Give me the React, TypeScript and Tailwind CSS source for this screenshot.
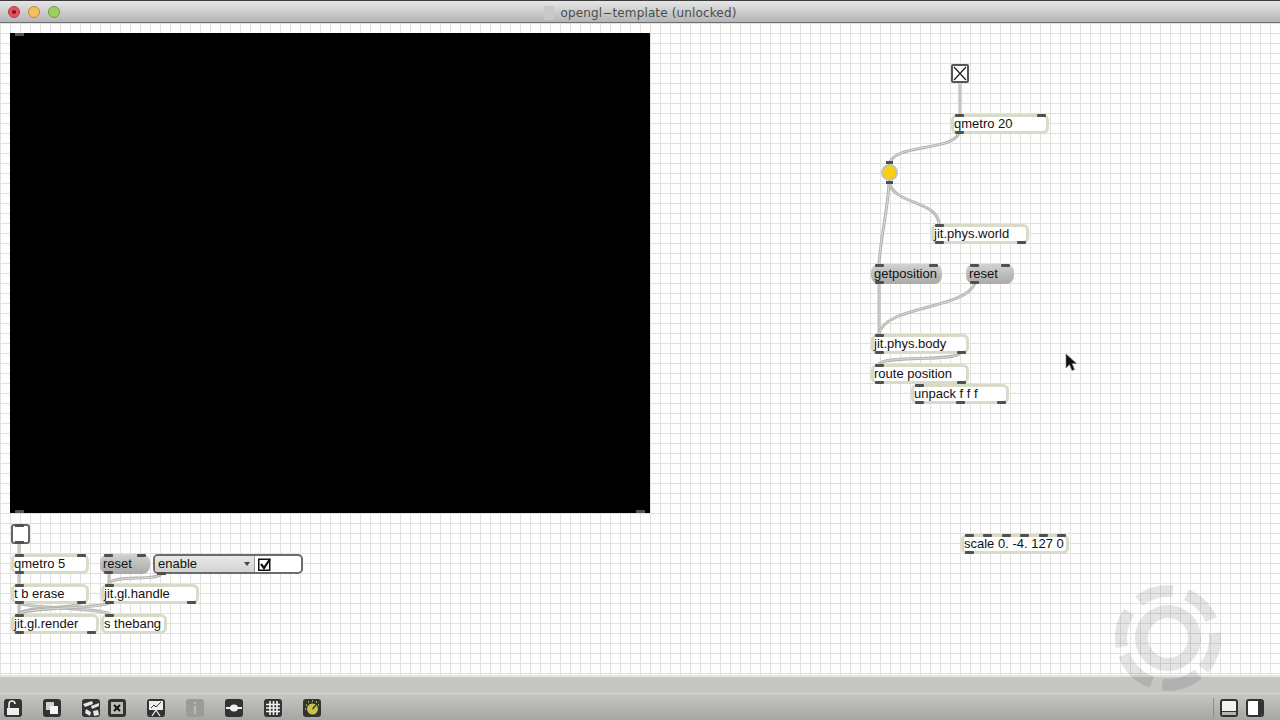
import type { ReactNode } from "react";

type Node = { text: string; pos: string; ins: number; outs: number; msg?: boolean };

// patcher objects, placed on the canvas (canvas top is y=23 on screen)
const nodes: Node[] = [
  { text: "qmetro 20", pos: "left-[951px] top-[91px] w-[98px]", ins: 2, outs: 1 },
  { text: "jit.phys.world", pos: "left-[931px] top-[201px] w-[98px]", ins: 1, outs: 2 },
  { text: "getposition", pos: "left-[871px] top-[241px] w-[71px]", ins: 2, outs: 1, msg: true },
  { text: "reset", pos: "left-[966px] top-[241px] w-[48px]", ins: 2, outs: 1, msg: true },
  { text: "jit.phys.body", pos: "left-[871px] top-[311px] w-[98px]", ins: 1, outs: 2 },
  { text: "route position", pos: "left-[871px] top-[341px] w-[98px]", ins: 1, outs: 2 },
  { text: "unpack f f f", pos: "left-[911px] top-[361px] w-[98px]", ins: 1, outs: 3 },
  { text: "scale 0. -4. 127 0", pos: "left-[961px] top-[511px] w-[108px]", ins: 6, outs: 1 },
  { text: "qmetro 5", pos: "left-[11px] top-[531px] w-[78px]", ins: 2, outs: 1 },
  { text: "reset", pos: "left-[100px] top-[531px] w-[50px]", ins: 2, outs: 1, msg: true },
  { text: "t b erase", pos: "left-[11px] top-[561px] w-[78px]", ins: 1, outs: 2 },
  { text: "jit.gl.handle", pos: "left-[101px] top-[561px] w-[98px]", ins: 1, outs: 2 },
  { text: "jit.gl.render", pos: "left-[11px] top-[591px] w-[88px]", ins: 1, outs: 2 },
  { text: "s thebang", pos: "left-[101px] top-[591px] w-[66px]", ins: 1, outs: 0 },
];

const cords = [
  "M960 82 L960 114",
  "M959 133 C952 152 892 143 889 165",
  "M889 181 C892 205 938 200 939 224",
  "M889 182 C888 210 880 240 879 265",
  "M879 283 L879 334",
  "M975 283 C965 310 885 305 879 334",
  "M960 353 C955 362 885 355 879 364",
  "M19 543 L19 554",
  "M19 573 L19 584",
  "M109 573 L109 584",
  "M162 573 C160 582 112 574 109 584",
  "M19 603 L19 614",
  "M80 603 C76 609 25 606 19 614",
  "M19 603 C22 608 105 608 109 614",
  "M109 603 C100 609 25 607 19 614",
];

function Ports({ count, inset }: { count: number; inset: string }) {
  const bars = Array.from({ length: count });
  return (
    <div className={`absolute flex justify-between ${inset}`}>
      {bars.map((_, i) => (
        <span key={i} className="h-[3px] w-[9px] rounded-[1px] bg-[#50504e]" />
      ))}
    </div>
  );
}

function PatchBox({ node }: { node: Node }) {
  const look = node.msg
    ? "rounded-[8px] bg-gradient-to-b from-[#d2d2d0] to-[#a9a9a7] pl-[3px]"
    : "rounded-[6px] border-[3px] border-[#d9dbc9] bg-white";
  const top = node.msg ? "left-[4px] right-[4px] top-0" : "left-[1px] right-0 top-[-3px]";
  const bottom = node.msg ? "left-[4px] right-[4px] bottom-0" : "left-[1px] right-0 bottom-[-3px]";
  return (
    <div className={`absolute flex h-[20px] items-center pb-[1px] text-[13px] text-[#111] ${node.pos} ${look}`}>
      <Ports count={node.ins} inset={top} />
      <span className="whitespace-nowrap">{node.text}</span>
      <Ports count={node.outs} inset={bottom} />
    </div>
  );
}

function arc(from: number, to: number, r1: number, r2: number) {
  const pt = (deg: number, r: number) => {
    const a = (deg * Math.PI) / 180;
    return `${(60 + r * Math.sin(a)).toFixed(1)} ${(60 - r * Math.cos(a)).toFixed(1)}`;
  };
  return `M${pt(from, r2)} A${r2} ${r2} 0 0 1 ${pt(to, r2)} L${pt(to, r1)} A${r1} ${r1} 0 0 0 ${pt(from, r1)} Z`;
}

const logoSegments: [number, number][] = [
  [-38, 6],
  [23, 67],
  [84, 131],
  [140, 187],
  [200, 249],
  [259, 304],
];

function Tool({ children, muted, className = "" }: { children: ReactNode; muted?: boolean; className?: string }) {
  return (
    <div className={`h-[18px] w-[18px] shrink-0 overflow-hidden rounded-[3px] ${muted ? "bg-[#9b9c99]" : "bg-[#333432]"} ${className}`}>
      <svg viewBox="0 0 18 18" className="h-full w-full">
        {children}
      </svg>
    </div>
  );
}

export default function App() {
  return (
    <div className="relative flex h-[720px] w-[1280px] flex-col overflow-hidden bg-white font-['Liberation_Sans',Arial,sans-serif]">
      {/* title bar */}
      <div className="relative flex h-[23px] shrink-0 items-center justify-center border-b border-t border-b-[#6e6e6e] border-t-[#3c3c3c] bg-gradient-to-b from-[#e6e6e6] to-[#b4b5b4] pt-[2px]">
        <div className="absolute left-[8px] top-[5px] flex gap-[8px]">
          <span className="flex h-[12px] w-[12px] items-center justify-center rounded-full border border-[#a8404a] bg-[#e8505c]">
            <span className="h-[4px] w-[4px] rounded-full bg-[#7a1420]" />
          </span>
          <span className="h-[12px] w-[12px] rounded-full border border-[#b98a3c] bg-[#f4bf60]" />
          <span className="h-[12px] w-[12px] rounded-full border border-[#6f9a42] bg-[#9ed060]" />
        </div>
        <div className="flex items-center gap-[7px]">
          <span className="h-[14px] w-[10px] rounded-[1px] bg-[#c9c9c7]" />
          <span className="font-['DejaVu_Sans',sans-serif] text-[12px] tracking-[0.14px] text-[#4c4c4c]">opengl−template (unlocked)</span>
        </div>
      </div>

      {/* patcher canvas */}
      <div className="relative flex-1 bg-[#fefefe] bg-[linear-gradient(to_right,#e1e2df_1px,transparent_1px),linear-gradient(to_bottom,#e1e2df_1px,transparent_1px)] bg-[size:10px_10px]">
        <div className="absolute left-[10px] top-[10px] h-[480px] w-[640px] bg-black">
          <span className="absolute left-[5px] top-0 h-[3px] w-[9px] bg-[#555]" />
          <span className="absolute bottom-0 left-[5px] h-[3px] w-[9px] bg-[#555]" />
          <span className="absolute bottom-0 right-[5px] h-[3px] w-[9px] bg-[#555]" />
        </div>

        <svg viewBox="0 23 1280 652" className="absolute inset-0 h-full w-full" fill="none">
          {cords.map((d) => (
            <g key={d}>
              <path d={d} stroke="#b2b3af" strokeWidth="3" />
              <path d={d} stroke="#dadad7" strokeWidth="1" />
            </g>
          ))}
        </svg>

        {nodes.map((n) => (
          <PatchBox key={n.pos} node={n} />
        ))}

        {/* toggle with x */}
        <div className="absolute left-[951px] top-[41px] h-[19px] w-[18px] rounded-[2px] border-2 border-[#555] bg-white">
          <svg viewBox="0 0 14 15" className="h-full w-full" stroke="#222" strokeWidth="1.2">
            <path d="M1 1 L13 14 M13 1 L1 14" />
          </svg>
        </div>

        {/* yellow led */}
        <div className="absolute left-[881px] top-[141px] h-[17px] w-[17px] rounded-full border-2 border-[#c2c2ae] bg-[#f8d010]">
          <span className="absolute left-[3px] top-[-5px] h-[3px] w-[7px] bg-[#50504e]" />
          <span className="absolute bottom-[-5px] left-[3px] h-[3px] w-[7px] bg-[#50504e]" />
        </div>

        {/* bang button */}
        <div className="absolute left-[11px] top-[501px] h-[20px] w-[19px] rounded-[3px] border-2 border-[#666] bg-white">
          <span className="absolute left-[2px] top-[-2px] h-[3px] w-[9px] bg-[#50504e]" />
          <span className="absolute bottom-[-2px] left-[2px] h-[3px] w-[9px] bg-[#50504e]" />
        </div>

        {/* umenu + toggle */}
        <div className="absolute left-[153px] top-[531px] flex h-[20px] w-[150px] overflow-hidden rounded-[5px] border-2 border-[#6c6c6c] bg-white text-[13px] text-[#111]">
          <div className="flex w-[99px] items-center justify-between bg-gradient-to-b from-[#e8e8e6] to-[#d2d2d0] pl-[3px] pr-[4px]">
            <span className="pb-[1px]">enable</span>
            <span className="h-0 w-0 border-x-[3px] border-t-[4px] border-x-transparent border-t-[#444]" />
          </div>
          <div className="flex flex-1 items-center border-l border-[#999] pl-[3px]">
            <svg viewBox="0 0 13 13" className="h-[13px] w-[13px]" fill="none">
              <rect x="0.75" y="1.25" width="11" height="11" stroke="#111" strokeWidth="1.5" />
              <path d="M3 6 L6 10 L12 1" stroke="#111" strokeWidth="2.2" />
            </svg>
          </div>
        </div>
        <span className="absolute left-[157px] top-[549px] h-[3px] w-[9px] bg-[#50504e]" />

        {/* mouse pointer */}
        <svg viewBox="0 0 14 20" className="absolute left-[1065px] top-[330px] h-[20px] w-[14px]">
          <path d="M1 1 L1 15 L4.5 11.5 L7 17.5 L9.5 16.5 L7 10.5 L11.5 10.5 Z" fill="#111" stroke="#777" strokeWidth="0.6" />
        </svg>
      </div>

      {/* bottom toolbar */}
      <div className="flex h-[45px] shrink-0 flex-col border-t-2 border-[#e4e4e2]">
        <div className="h-[17px] border-b border-[#d4d4d1] bg-[#c6c7c3]" />
        <div className="flex flex-1 items-center bg-gradient-to-b from-[#c6c7c3] to-[#a6a7a4] pl-[4px] pt-[1px]">
          <Tool>
            <rect x="3" y="9" width="12" height="7" fill="#eee" />
            <path d="M5 9 V5 a3 3 0 0 1 6 0" fill="none" stroke="#eee" strokeWidth="1.6" />
          </Tool>
          <Tool className="ml-[21px]">
            <path d="M3 3 H11 V7 H15 V15 H7 V11 H3 Z" fill="#d0d0ce" />
            <path d="M7 7 H15 V15 H7 Z" fill="#f4f4f4" />
          </Tool>
          <Tool className="ml-[21px]">
            <path d="M1 5 L10 2 L11 5 L3 8 Z M9 7 L17 4 L17 7 L10 10 Z M4 10 L9 13 L8 17 L3 14 Z M11 12 L16 11 L17 16 L12 17 Z" fill="#e6e6e6" />
          </Tool>
          <Tool className="ml-[8px]">
            <rect x="3" y="3" width="12" height="12" fill="#b9b9b6" />
            <path d="M6 6 L12 12 M12 6 L6 12" stroke="#111" strokeWidth="2" />
          </Tool>
          <Tool className="ml-[21px]">
            <rect x="2" y="2" width="14" height="9" fill="#eee" />
            <path d="M4 9 L7 6 L9 8 L14 3" fill="none" stroke="#333" strokeWidth="1" />
            <path d="M9 11 L5 17 M9 11 L13 17" stroke="#eee" strokeWidth="1.3" />
          </Tool>
          <Tool muted className="ml-[21px]">
            <rect x="8" y="3" width="2" height="2" fill="#bbb" />
            <rect x="8" y="7" width="2" height="8" fill="#bbb" />
          </Tool>
          <Tool className="ml-[21px]">
            <rect x="1" y="8" width="16" height="2" fill="#eee" />
            <ellipse cx="9" cy="9" rx="4" ry="3.5" fill="#eee" />
          </Tool>
          <Tool className="ml-[21px]">
            <path d="M6 2 V16 M9.5 2 V16 M13 2 V16 M2 5.5 H16 M2 9 H16 M2 12.5 H16" stroke="#f2f2f2" strokeWidth="1.6" />
          </Tool>
          <Tool className="ml-[21px]">
            <circle cx="9.5" cy="10" r="5.5" fill="#c8c24a" />
            <path d="M9.5 10 L13 6" stroke="#333" strokeWidth="1.2" />
            <path d="M3 6 h1 M5 3 h1 M9 2 h1 M13 3 h1 M15 6 h1 M2 10 h1" stroke="#a4d060" strokeWidth="1.6" />
          </Tool>
          <div className="ml-auto flex h-full items-center">
            <span className="h-[20px] w-px bg-[#8c8d8a]" />
            <div className="ml-[6px] flex h-[18px] w-[18px] flex-col overflow-hidden rounded-[3px] border-2 border-[#333432] bg-[#f2f2f0]">
              <span className="mt-auto h-[4px] border-t border-[#333432] bg-[#b5b5b2]" />
            </div>
            <div className="ml-[8px] mr-[16px] flex h-[18px] w-[18px] justify-end overflow-hidden rounded-[3px] border-2 border-[#333432] bg-white">
              <span className="h-full w-[4px] bg-[#333432]" />
            </div>
          </div>
        </div>
      </div>

      {/* watermark logo over canvas and toolbar */}
      <svg viewBox="0 0 120 120" className="pointer-events-none absolute left-[1108px] top-[578px] h-[120px] w-[120px]" fill="#000" fillOpacity="0.1">
        <path fillRule="evenodd" d="M60 27 a33 33 0 1 0 0.01 0 Z M60 40 a20 20 0 1 1 -0.01 0 Z" />
        {logoSegments.map(([a, b]) => (
          <path key={a} d={arc(a, b, 41, 53)} />
        ))}
      </svg>
    </div>
  );
}
